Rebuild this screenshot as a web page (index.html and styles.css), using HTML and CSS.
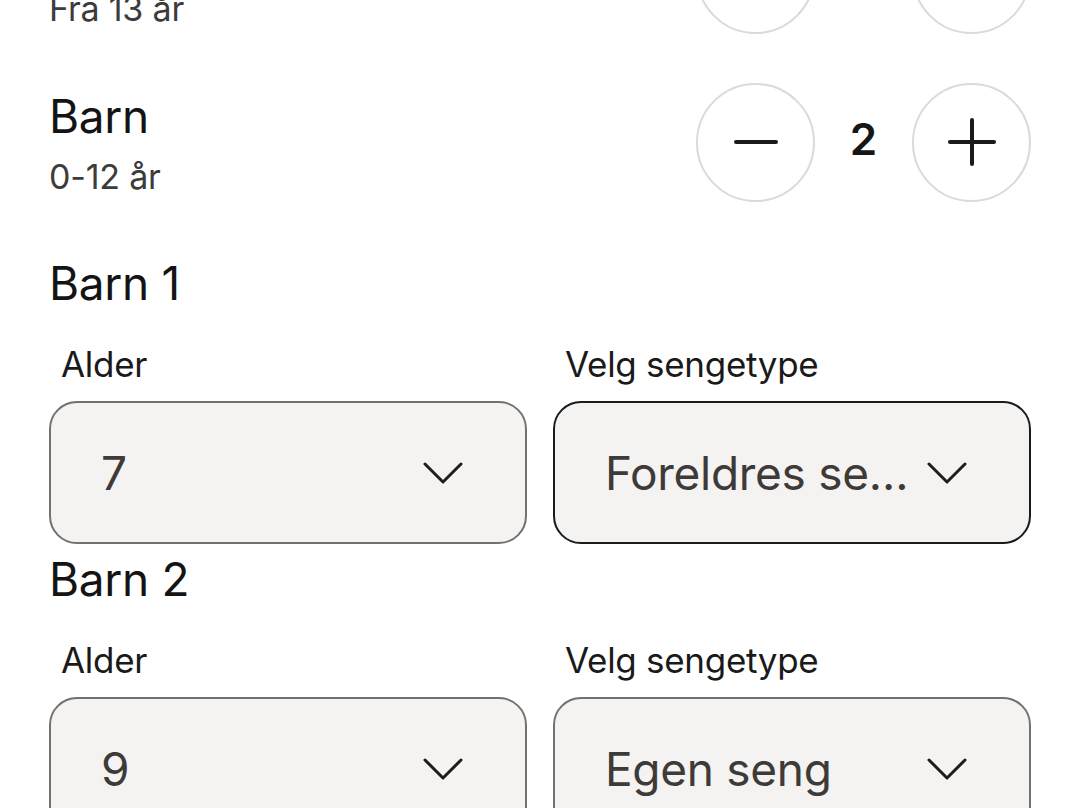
FILE: index.html
```html
<!DOCTYPE html>
<html lang="no">
<head>
<meta charset="utf-8">
<title>Gjester</title>
<link rel="stylesheet" href="styles.css">
</head>
<body>
<main class="page">
  <section class="guest-row">
    <div class="guest-text">
      <div class="guest-title">Voksne</div>
      <div class="guest-sub">Fra 13 år</div>
    </div>
    <div class="counter">
      <button class="circle" aria-label="Færre voksne">
        <svg viewBox="0 0 48 48" width="48" height="48"><path d="M4 24H44" /></svg>
      </button>
      <span class="count">2</span>
      <button class="circle" aria-label="Flere voksne">
        <svg viewBox="0 0 48 48" width="48" height="48"><path d="M2 24H46M24 2V46" /></svg>
      </button>
    </div>
  </section>

  <section class="guest-row">
    <div class="guest-text">
      <div class="guest-title">Barn</div>
      <div class="guest-sub">0-12 år</div>
    </div>
    <div class="counter">
      <button class="circle" aria-label="Færre barn">
        <svg viewBox="0 0 48 48" width="48" height="48"><path d="M4 24H44" /></svg>
      </button>
      <span class="count">2</span>
      <button class="circle" aria-label="Flere barn">
        <svg viewBox="0 0 48 48" width="48" height="48"><path d="M2 24H46M24 2V46" /></svg>
      </button>
    </div>
  </section>

  <div class="children">
    <section class="child">
      <h2 class="child-title">Barn 1</h2>
      <div class="fields">
        <div class="field">
          <div class="field-label">Alder</div>
          <div class="select">
            <span class="select-value">7</span>
            <svg class="chevron" viewBox="0 0 40 22" width="40" height="22"><path d="M2 2L20 20L38 2" /></svg>
          </div>
        </div>
        <div class="field">
          <div class="field-label">Velg sengetype</div>
          <div class="select select-active">
            <span class="select-value">Foreldres seng</span>
            <svg class="chevron" viewBox="0 0 40 22" width="40" height="22"><path d="M2 2L20 20L38 2" /></svg>
          </div>
        </div>
      </div>
    </section>

    <section class="child">
      <h2 class="child-title">Barn 2</h2>
      <div class="fields">
        <div class="field">
          <div class="field-label">Alder</div>
          <div class="select">
            <span class="select-value">9</span>
            <svg class="chevron" viewBox="0 0 40 22" width="40" height="22"><path d="M2 2L20 20L38 2" /></svg>
          </div>
        </div>
        <div class="field">
          <div class="field-label">Velg sengetype</div>
          <div class="select">
            <span class="select-value">Egen seng</span>
            <svg class="chevron" viewBox="0 0 40 22" width="40" height="22"><path d="M2 2L20 20L38 2" /></svg>
          </div>
        </div>
      </div>
    </section>
  </div>
</main>
</body>
</html>
```

FILE: styles.css
```css
html, body {
  margin: 0;
  padding: 0;
  background: #ffffff;
}

body {
  font-family: Inter, "Noto Sans", "Liberation Sans", sans-serif;
  color: #151515;
  overflow: hidden;
}

.page {
  margin-top: -110px;
  padding: 0 49px;
}

.guest-row {
  height: 168px;
  display: flex;
  align-items: center;
  justify-content: space-between;
}

.guest-text {
  display: flex;
  flex-direction: column;
  gap: 12px;
  padding-top: 2px;
}

.guest-title {
  font-size: 46px;
  line-height: 55px;
  color: #141414;
  letter-spacing: -0.3px;
}

.guest-sub {
  font-size: 34px;
  line-height: 42px;
  color: #3c3c3c;
  letter-spacing: -0.2px;
}

.counter {
  display: flex;
  align-items: center;
}

.circle {
  width: 119px;
  height: 119px;
  box-sizing: border-box;
  border-radius: 50%;
  border: 2.5px solid #dcdad6;
  background: #ffffff;
  padding: 0;
  display: flex;
  align-items: center;
  justify-content: center;
}

.circle svg {
  stroke: #1a1a1a;
  stroke-width: 4;
  stroke-linecap: round;
  fill: none;
}

.count {
  width: 97px;
  margin-bottom: 7px;
  text-align: center;
  font-size: 44px;
  font-weight: 600;
  color: #161616;
}

.children {
  margin-top: 30px;
  display: flex;
  flex-direction: column;
  gap: 8px;
}

.child-title {
  margin: 0;
  font-size: 46px;
  line-height: 55px;
  font-weight: 400;
  color: #141414;
  letter-spacing: -0.3px;
}

.fields {
  margin-top: 32px;
  display: grid;
  grid-template-columns: minmax(0, 1fr) minmax(0, 1fr);
  gap: 26px;
}

.field {
  display: flex;
  flex-direction: column;
  gap: 16px;
  min-width: 0;
}

.field-label {
  padding-left: 12px;
  font-size: 35px;
  line-height: 42px;
  color: #1a1a1a;
  letter-spacing: -0.3px;
}

.select {
  height: 143px;
  box-sizing: border-box;
  border: 2.5px solid #73716e;
  border-radius: 28px;
  background: #f4f3f1;
  display: flex;
  align-items: center;
  padding: 0 62px 0 50px;
  gap: 12px;
}

.select-active {
  border-color: #1b1b1b;
}

.select-value {
  flex: 1;
  min-width: 0;
  font-size: 46px;
  color: #3d3a38;
  white-space: nowrap;
  overflow: hidden;
  text-overflow: ellipsis;
  letter-spacing: -0.3px;
}

.chevron {
  flex: none;
  stroke: #1d1d1d;
  stroke-width: 3;
  stroke-linecap: round;
  stroke-linejoin: round;
  fill: none;
}
```
